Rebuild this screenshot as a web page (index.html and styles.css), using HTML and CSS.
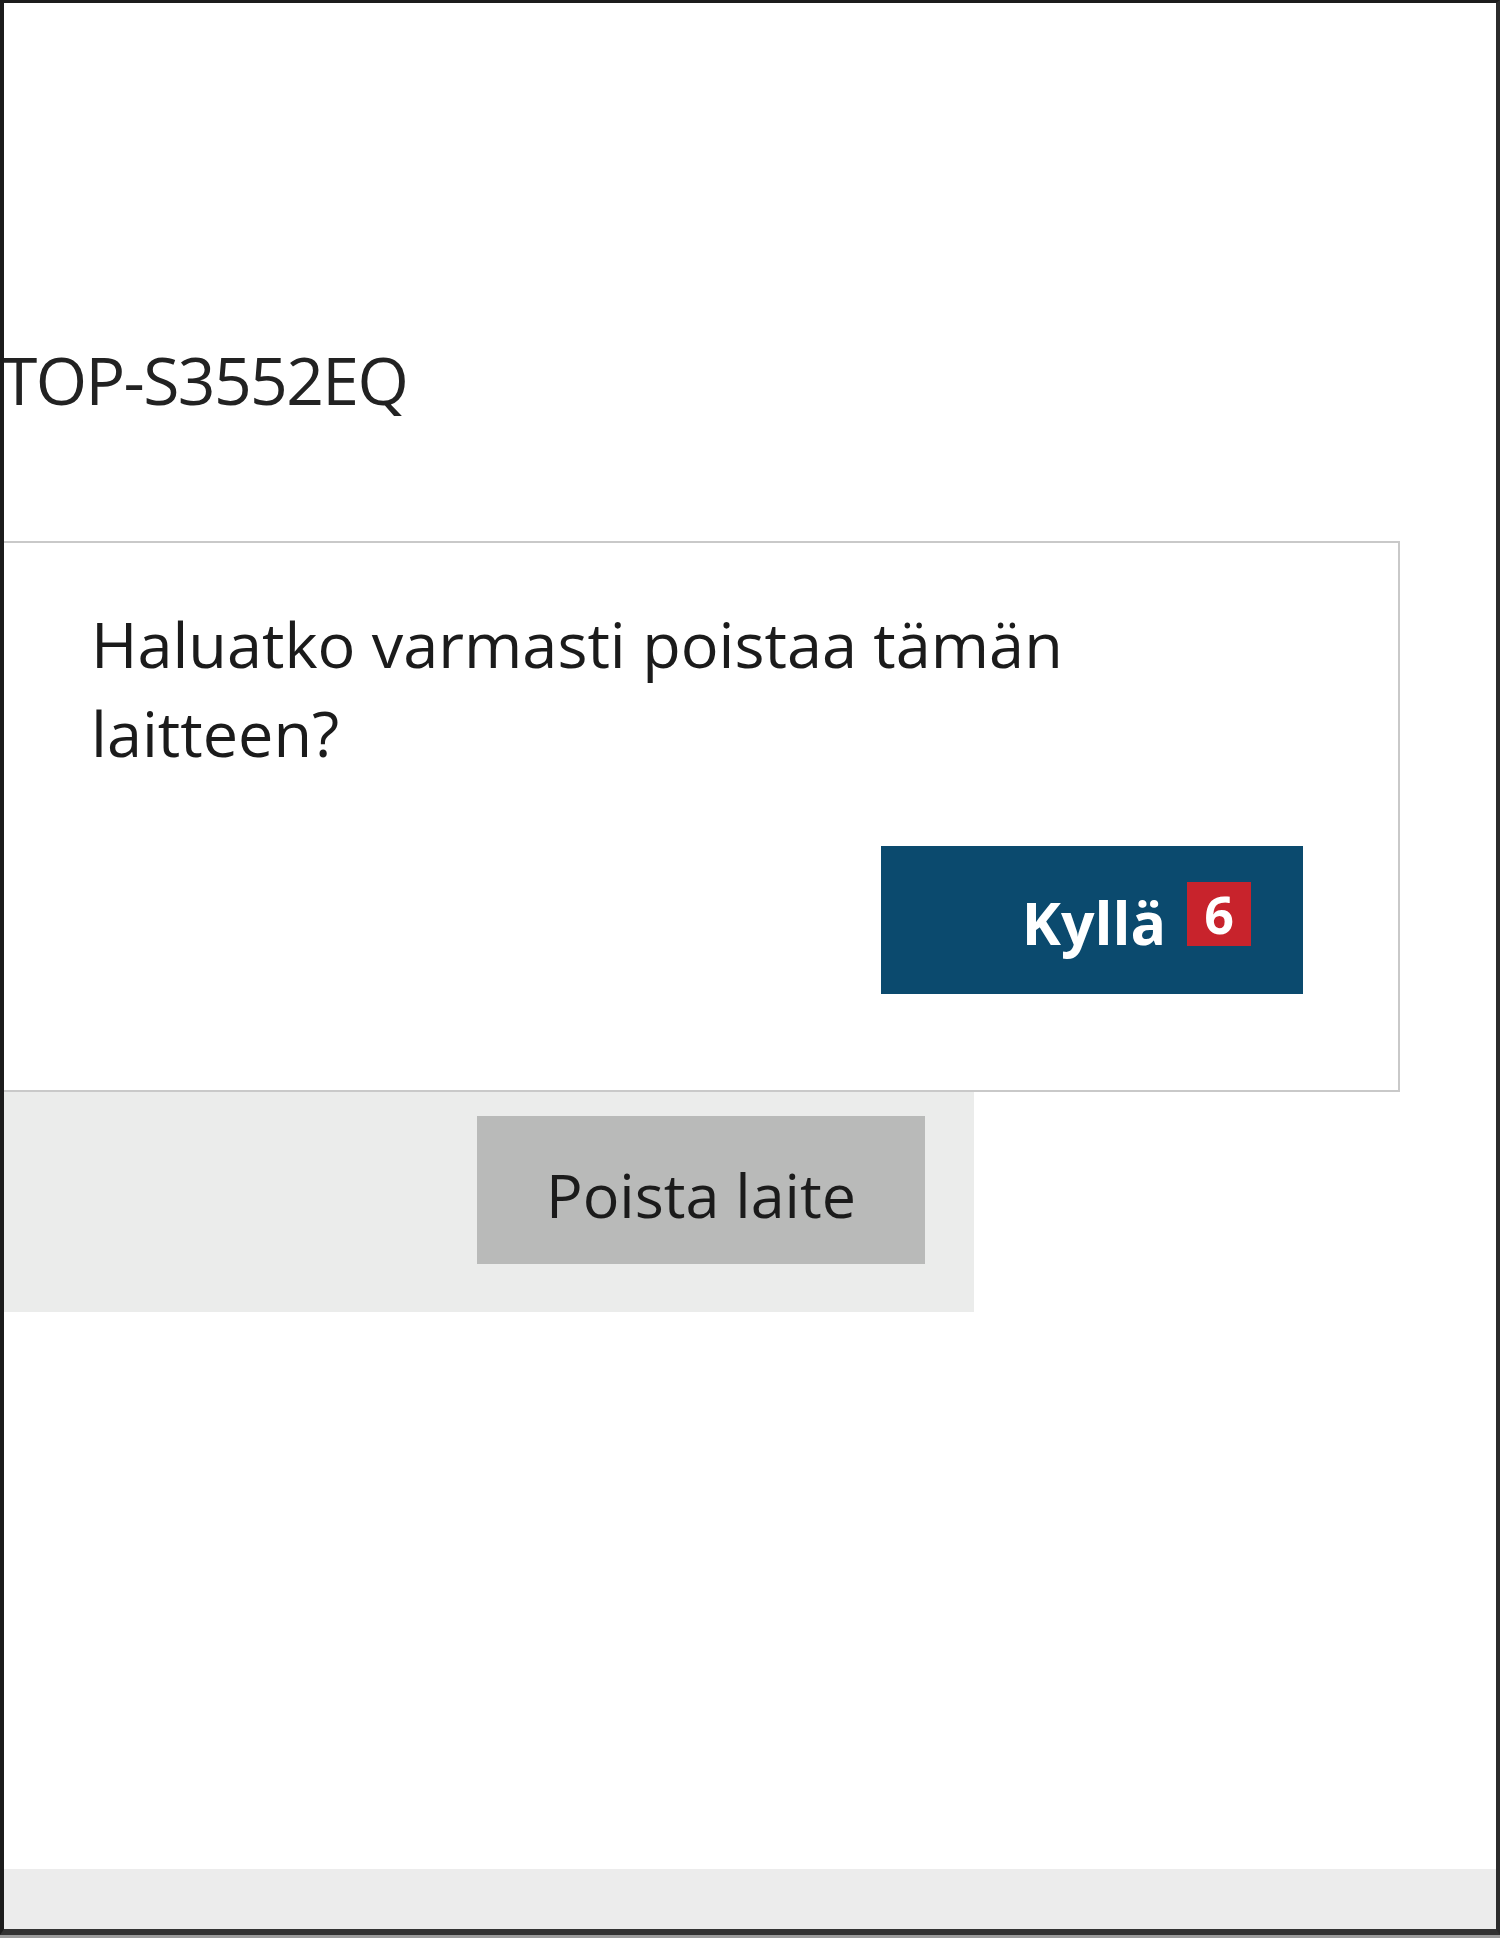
FILE: index.html
```html
<!DOCTYPE html>
<html lang="fi">
<head>
  <meta charset="UTF-8" />
  <meta name="viewport" content="width=device-width, initial-scale=1.0" />
  <title>Poista laite</title>
  <link rel="stylesheet" href="styles.css">
</head>
<body>
  <div class="window">
    <h1 class="device-name">TOP-S3552EQ</h1>

    <div class="confirm">
      <p class="confirm-text">Haluatko varmasti poistaa tämän laitteen?</p>
      <div class="confirm-actions">
        <button class="btn-yes"><span class="btn-label">Kyllä<span class="step-badge">6</span></span></button>
      </div>
    </div>

    <div class="remove-panel">
      <button class="btn-remove">Poista laite</button>
    </div>

    <div class="spacer"></div>
    <div class="status-bar"></div>
  </div>
</body>
</html>
```

FILE: styles.css
```css
* {
  box-sizing: border-box;
}
html, body {
  margin: 0;
  padding: 0;
  background: #9c9c9c;
}
.window {
  height: 1935px;
  display: flex;
  flex-direction: column;
  overflow: hidden;
  background: #fff;
  border-top: 3px solid #1c1c1c;
  border-left: 4px solid #1c1c1c;
  border-right: 4px solid #2c2c2c;
  border-bottom: 6px solid #333;
  font-family: "Open Sans", "Noto Sans", sans-serif;
  color: #1b1b1b;
}
.device-name {
  margin: 0 0 0 -3px;
  padding-top: 336px;
  font-size: 66px;
  line-height: 80px;
  font-weight: 400;
  letter-spacing: -1.6px;
  color: #222;
}
.confirm {
  margin: 122px 96px 0 -8px;
  padding: 56px 95px 96px 93px;
  border: 2px solid #c9c9c9;
  background: #fff;
}
.confirm-text {
  margin: 0;
  max-width: 1000px;
  font-size: 63px;
  line-height: 89px;
}
.confirm-actions {
  display: flex;
  justify-content: flex-end;
  margin-top: 69px;
}
button {
  font-family: inherit;
  border: none;
  cursor: pointer;
  display: flex;
  align-items: center;
  justify-content: center;
}
.btn-yes {
  width: 422px;
  height: 148px;
  padding: 4px 0 0 4px;
  background: #0b4a6e;
  color: #fff;
  font-size: 59px;
  font-weight: 700;
}
.btn-label {
  position: relative;
  line-height: 1;
}
.step-badge {
  position: absolute;
  left: calc(100% + 21px);
  bottom: 6px;
  width: 64px;
  height: 64px;
  background: #c8232c;
  color: #fff;
  font-size: 52px;
  font-weight: 700;
  line-height: 64px;
  text-align: center;
}
.remove-panel {
  width: 970px;
  display: flex;
  justify-content: flex-end;
  padding: 24px 49px 48px 0;
  background: #ebeceb;
}
.btn-remove {
  width: 448px;
  height: 148px;
  padding: 8px 0 0;
  background: #b9bab9;
  color: #1b1b1b;
  font-size: 61px;
}
.spacer {
  flex: 1;
}
.status-bar {
  height: 60px;
  background: #ececec;
}
```
